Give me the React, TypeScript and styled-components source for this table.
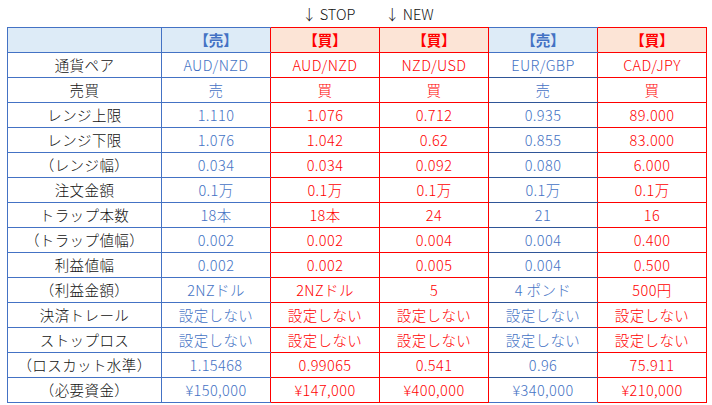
import React from "react";
import styled, { createGlobalStyle } from "styled-components";

type Kind = "label" | "sell" | "buy";

const GlobalStyle = createGlobalStyle`
  html, body { margin: 0; padding: 0; background: #ffffff; }
  body {
    font-family: "Noto Sans CJK JP", "Noto Sans", sans-serif;
    color: #000;
  }
`;

const Page = styled.div`
  width: 712px;
  height: 405px;
  padding: 0 0 0 7px;
  box-sizing: border-box;
  overflow: hidden;
`;

const Marks = styled.div`
  display: grid;
  grid-template-columns: 154px repeat(5, 109px);
  height: 27px;
  align-items: center;
`;

const Mark = styled.div<{ $col: number; $indent: number }>`
  grid-column: ${(p) => p.$col};
  padding-left: ${(p) => p.$indent}px;
  font-size: 14.5px;
  font-weight: 300;
  line-height: 27px;
  color: #111;
  white-space: nowrap;
`;

const Table = styled.table`
  border-collapse: collapse;
  table-layout: fixed;
  width: 699px;
`;

const Col = styled.col<{ $w: number }>`
  width: ${(p) => p.$w}px;
`;

const HeadCell = styled.th<{ $kind: Kind; $openRight?: boolean }>`
  height: 24px;
  padding: 0;
  text-align: center;
  font-size: 14.5px;
  font-weight: 700;
  line-height: 24px;
  background: ${(p) => (p.$kind === "buy" ? "#FCE4D6" : "#DDEBF7")};
  color: ${(p) => (p.$kind === "buy" ? "#FF0000" : "#4472C4")};
  border: 1px solid ${(p) => (p.$kind === "buy" ? "#FF0000" : "#4472C4")};
  ${(p) => (p.$openRight ? "border-right-style: none;" : "")}
`;

const Cell = styled.td<{ $kind: Kind; $line: string; $openRight?: boolean }>`
  height: 24px;
  padding: 0;
  text-align: center;
  white-space: nowrap;
  font-size: 14.5px;
  font-weight: 300;
  letter-spacing: 0.4px;
  line-height: 24px;
  color: ${(p) =>
    p.$kind === "buy" ? "#FF0000" : p.$kind === "sell" ? "#4472C4" : "#111"};
  border: 1px solid ${(p) => p.$line};
  ${(p) => (p.$openRight ? "border-right-style: none;" : "")}
`;

const kinds: Kind[] = ["label", "sell", "buy", "buy", "sell", "buy"];
const widths = [154, 109, 109, 109, 109, 109];
const heads = ["", "【売】", "【買】", "【買】", "【売】", "【買】"];

const rows: string[][] = [
  ["通貨ペア", "AUD/NZD", "AUD/NZD", "NZD/USD", "EUR/GBP", "CAD/JPY"],
  ["売買", "売", "買", "買", "売", "買"],
  ["レンジ上限", "1.110", "1.076", "0.712", "0.935", "89.000"],
  ["レンジ下限", "1.076", "1.042", "0.62", "0.855", "83.000"],
  ["（レンジ幅）", "0.034", "0.034", "0.092", "0.080", "6.000"],
  ["注文金額", "0.1万", "0.1万", "0.1万", "0.1万", "0.1万"],
  ["トラップ本数", "18本", "18本", "24", "21", "16"],
  ["（トラップ値幅）", "0.002", "0.002", "0.004", "0.004", "0.400"],
  ["利益値幅", "0.002", "0.002", "0.005", "0.004", "0.500"],
  ["（利益金額）", "2NZドル", "2NZドル", "5", "4 ポンド", "500円"],
  ["決済トレール", "設定しない", "設定しない", "設定しない", "設定しない", "設定しない"],
  ["ストップロス", "設定しない", "設定しない", "設定しない", "設定しない", "設定しない"],
  ["（ロスカット水準）", "1.15468", "0.99065", "0.541", "0.96", "75.911"],
  ["（必要資金）", "¥150,000", "¥147,000", "¥400,000", "¥340,000", "¥210,000"],
];

const lineFor = (col: number, rowIdx: number): string => {
  const k = kinds[col];
  if (k === "buy") return "#FF0000";
  if (col === 4 && rowIdx < rows.length - 1) return "#2F5597";
  return "#4472C4";
};

const opensRight = (col: number) =>
  kinds[col] !== "buy" && col + 1 < kinds.length && kinds[col + 1] === "buy";

export default function App() {
  return (
    <Page>
      <GlobalStyle />
      <Marks>
        <Mark $col={3} $indent={32}>↓ STOP</Mark>
        <Mark $col={4} $indent={6}>↓ NEW</Mark>
      </Marks>
      <Table>
        <colgroup>
          {widths.map((w, i) => (
            <Col key={i} $w={w} />
          ))}
        </colgroup>
        <thead>
          <tr>
            {heads.map((h, i) => (
              <HeadCell key={i} $kind={kinds[i]} $openRight={opensRight(i)}>
                {h}
              </HeadCell>
            ))}
          </tr>
        </thead>
        <tbody>
          {rows.map((r, ri) => (
            <tr key={ri}>
              {r.map((v, ci) => (
                <Cell
                  key={ci}
                  $kind={kinds[ci]}
                  $line={lineFor(ci, ri)}
                  $openRight={opensRight(ci)}
                >
                  {v}
                </Cell>
              ))}
            </tr>
          ))}
        </tbody>
      </Table>
    </Page>
  );
}
